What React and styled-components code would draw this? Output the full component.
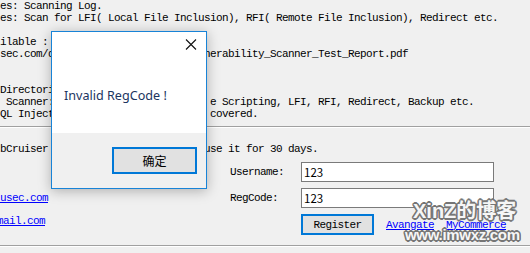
import React from "react";
import styled, { createGlobalStyle } from "styled-components";

const mono = `"Liberation Mono", "DejaVu Sans Mono", monospace`;
const ui = `"Noto Sans", "Noto Sans CJK SC", sans-serif`;

const Global = createGlobalStyle`
  html, body { margin: 0; padding: 0; background: #f0f0f0; }
  body { width: 530px; height: 253px; overflow: hidden; }
`;

const Page = styled.div`
  position: relative;
  width: 530px;
  height: 253px;
  overflow: hidden;
  background: #f0f0f0;
  color: #000;
  font: 11px/12px ${mono};
  letter-spacing: -0.6px;
`;

const TextBlock = styled.div`
  white-space: pre;
`;

const Line = styled.div`
  height: 12px;
  white-space: pre;
`;

const Separator = styled.div`
  height: 1px;
  background: #a0a0a0;
  border-bottom: 1px solid #ffffff;
  margin-top: ${(p) => p.$gap}px;
`;

const InfoLine = styled.div`
  margin-top: 15px;
  height: 12px;
  white-space: pre;
`;

const FormArea = styled.div`
  display: flex;
  margin-top: 7px;
`;

const LeftLinks = styled.div`
  width: 230px;
  flex-shrink: 0;
  display: flex;
  flex-direction: column;
  align-items: flex-start;
  gap: 11px;
  padding-top: 30px;
`;

const Link = styled.a`
  flex-shrink: 0;
  color: #0000ff;
  text-decoration: underline;
  white-space: pre;
  line-height: 12px;
  margin-left: ${(p) => p.$shift || 0}px;
`;

const Form = styled.div`
  display: grid;
  grid-template-columns: 71px 193px;
  grid-template-rows: 20px 20px 21px;
  row-gap: 6px;
  align-items: center;
`;

const Label = styled.div`
  white-space: pre;
`;

const Field = styled.input`
  box-sizing: border-box;
  width: 193px;
  height: 20px;
  margin: 0;
  padding: 0 2px;
  border: 1px solid #7a7a7a;
  background: #fff;
  font: 11.5px/18px "Noto Sans CJK SC", sans-serif;
  letter-spacing: 0;
  color: #000;
  outline: none;
`;

const ButtonRow = styled.div`
  grid-column: 2;
  display: flex;
  align-items: center;
  gap: 12px;
  white-space: nowrap;
`;

const RegisterButton = styled.button`
  flex-shrink: 0;
  box-sizing: border-box;
  width: 73px;
  height: 21px;
  margin: 0;
  padding: 0;
  border: 2px solid #0078d7;
  background: #e1e1e1;
  font: 11px/12px ${mono};
  letter-spacing: -0.6px;
  color: #000;
`;

const Dialog = styled.div`
  position: absolute;
  left: 51px;
  top: 31px;
  width: 156px;
  height: 158px;
  box-sizing: border-box;
  border: 1px solid #1883d7;
  background: #f0f0f0;
  display: flex;
  flex-direction: column;
  box-shadow: 0 2px 12px rgba(0, 0, 0, 0.28);
  letter-spacing: 0;
`;

const DialogBody = styled.div`
  height: 101px;
  background: #ffffff;
  display: flex;
  flex-direction: column;
`;

const CloseRow = styled.div`
  height: 30px;
  display: flex;
  justify-content: flex-end;
  padding: 7px 9px 0 0;
  box-sizing: border-box;
`;

const Message = styled.div`
  margin-top: 26px;
  padding-left: 12px;
  font: 12.6px/16px ${ui};
  color: #1b355f;
  white-space: pre;
`;

const DialogFooter = styled.div`
  flex: 1;
  display: flex;
  justify-content: flex-end;
  align-items: flex-start;
  padding: 14px 9px 0 0;
`;

const OkButton = styled.button`
  box-sizing: border-box;
  width: 85px;
  height: 27px;
  margin: 0;
  padding: 0;
  border: 2px solid #0078d7;
  background: #e1e1e1;
  font: 12px/16px "Noto Sans CJK SC", sans-serif;
  color: #000;
`;

const outline = "#767676";

const Watermark = styled.div`
  position: absolute;
  left: 402px;
  top: 199px;
  display: flex;
  flex-direction: column;
  align-items: flex-start;
  font-family: "Liberation Sans", "Noto Sans CJK SC", sans-serif;
  font-weight: 700;
  color: #f6f6f6;
  letter-spacing: 0;
  white-space: nowrap;
  text-shadow: -1.6px 0 ${outline}, 1.6px 0 ${outline}, 0 -1.6px ${outline}, 0 1.6px ${outline},
    -1.2px -1.2px ${outline}, 1.2px 1.2px ${outline}, -1.2px 1.2px ${outline}, 1.2px -1.2px ${outline};
  pointer-events: none;
`;

const WmTitle = styled.div`
  font-size: 20px;
  line-height: 24px;
  margin-left: 11px;
`;

const WmSite = styled.div`
  font-size: 15px;
  line-height: 18px;
  letter-spacing: -0.3px;
  margin-top: 3px;
  margin-left: 3px;
`;

const topLines = [
  "es: Scanning Log.",
  "es: Scan for LFI( Local File Inclusion), RFI( Remote File Inclusion), Redirect etc.",
  "",
  "ilable :",
  "sec.com/d                         nerability_Scanner_Test_Report.pdf",
  "",
  "",
  "Directori",
  " Scanner:                          e Scripting, LFI, RFI, Redirect, Backup etc.",
  "QL Inject                          covered.",
];

function CloseIcon() {
  return (
    <svg width="12" height="11" viewBox="0 0 12 11">
      <path d="M1 0.5 L11 10.5 M11 0.5 L1 10.5" stroke="#111" strokeWidth="1.1" fill="none" />
    </svg>
  );
}

export default function App() {
  return (
    <>
      <Global />
      <Page>
        <TextBlock>
          {topLines.map((l, i) => (
            <Line key={i}>{l}</Line>
          ))}
        </TextBlock>
        <Separator $gap={6} />
        <InfoLine>{"bCruiser                          use it for 30 days."}</InfoLine>
        <FormArea>
          <LeftLinks>
            <Link href="#">usec.com</Link>
            <Link href="#" $shift={-3}>mail.com</Link>
          </LeftLinks>
          <Form>
            <Label>Username:</Label>
            <Field readOnly value="123" />
            <Label>RegCode:</Label>
            <Field readOnly value="123" />
            <ButtonRow>
              <RegisterButton>Register</RegisterButton>
              <Link href="#">Avangate</Link>
              <Link href="#">MyCommerce</Link>
            </ButtonRow>
          </Form>
        </FormArea>
        <Separator $gap={10} />

        <Dialog>
          <DialogBody>
            <CloseRow>
              <CloseIcon />
            </CloseRow>
            <Message>Invalid RegCode !</Message>
          </DialogBody>
          <DialogFooter>
            <OkButton>确定</OkButton>
          </DialogFooter>
        </Dialog>

        <Watermark>
          <WmTitle>XinZ的博客</WmTitle>
          <WmSite>www.imwxz.com</WmSite>
        </Watermark>
      </Page>
    </>
  );
}
